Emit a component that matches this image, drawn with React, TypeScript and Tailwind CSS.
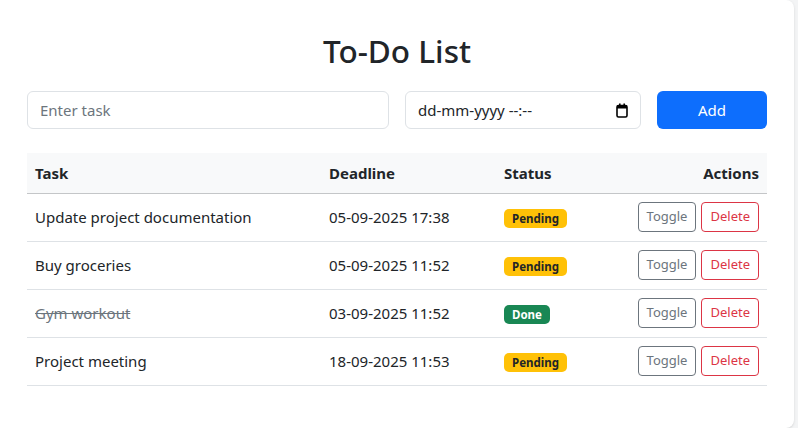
const tasks = [
  { name: "Update project documentation", deadline: "05-09-2025 17:38", done: false },
  { name: "Buy groceries", deadline: "05-09-2025 11:52", done: false },
  { name: "Gym workout", deadline: "03-09-2025 11:52", done: true },
  { name: "Project meeting", deadline: "18-09-2025 11:53", done: false },
];

function CalendarIcon() {
  return (
    <svg width="12" height="15" viewBox="0 0 12 15" className="shrink-0">
      <rect x="1" y="2.5" width="10" height="11.5" rx="1.5" fill="none" stroke="#000" strokeWidth="1.6" />
      <rect x="1" y="2.5" width="10" height="3" fill="#000" />
      <rect x="3" y="0.5" width="1.6" height="3" fill="#000" />
      <rect x="7.4" y="0.5" width="1.6" height="3" fill="#000" />
    </svg>
  );
}

export default function App() {
  return (
    <div className="w-full h-[428px] overflow-hidden bg-[#f3f4f5] font-['Noto_Sans',sans-serif] text-[#212529]">
      <div className="w-[794px] h-full bg-white rounded-r-lg shadow-sm px-[27px] pt-[30px]">
        {/* Title */}
        <h1 className="text-center text-[31.5px] leading-[41px] font-medium mb-[20px]">To-Do List</h1>

        {/* Form */}
        <div className="flex gap-4 mb-6">
          <div className="w-[362px] h-[38px] border border-[#dee2e6] rounded-md px-3 flex items-center text-[15px] text-[#6c757d]">
            Enter task
          </div>
          <div className="w-[236px] h-[38px] border border-[#dee2e6] rounded-md px-3 flex items-center justify-between text-[15px]">
            <span>dd-mm-yyyy --:--</span>
            <CalendarIcon />
          </div>
          <button className="w-[110px] h-[38px] bg-[#0d6efd] text-white rounded-md text-[15px]">Add</button>
        </div>

        {/* Table */}
        <table className="w-[740px] table-fixed border-collapse text-[15px]">
          <colgroup>
            <col className="w-[294px]" />
            <col className="w-[175px]" />
            <col className="w-[133px]" />
            <col className="w-[138px]" />
          </colgroup>
          <thead>
            <tr className="bg-[#f8f9fa] h-[40px] border-b border-[#c4c6c8]">
              <th className="text-left font-bold px-2">Task</th>
              <th className="text-left font-bold px-2">Deadline</th>
              <th className="text-left font-bold px-2">Status</th>
              <th className="text-right font-bold px-2">Actions</th>
            </tr>
          </thead>
          <tbody>
            {tasks.map((t) => (
              <tr key={t.name} className="h-[48px] border-b border-[#dee2e6]">
                <td className={"px-2 " + (t.done ? "line-through text-[#6c757d]" : "")}>{t.name}</td>
                <td className="px-2">{t.deadline}</td>
                <td className="px-2">
                  {t.done ? (
                    <span className="inline-block bg-[#198754] text-white text-[11.5px] font-bold leading-none px-[8px] py-[4px] rounded-[5px]">Done</span>
                  ) : (
                    <span className="inline-block bg-[#ffc107] text-[#212529] text-[11.5px] font-bold leading-none px-[8px] py-[4px] rounded-[5px]">Pending</span>
                  )}
                </td>
                <td className="px-2">
                  <div className="flex justify-end gap-[5px]">
                    <button className="h-[30px] px-2 border border-[#6c757d] text-[#6c757d] rounded text-[13px]">Toggle</button>
                    <button className="h-[30px] px-2 border border-[#dc3545] text-[#dc3545] rounded text-[13px]">Delete</button>
                  </div>
                </td>
              </tr>
            ))}
          </tbody>
        </table>
      </div>
    </div>
  );
}
